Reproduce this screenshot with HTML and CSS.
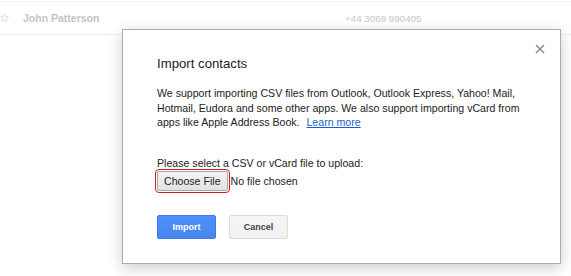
FILE: index.html
```html
<!DOCTYPE html>
<html lang="en">
<head>
  <meta charset="UTF-8">
  <meta name="viewport" content="width=device-width, initial-scale=1.0">
  <title>Import contacts</title>
  <link rel="stylesheet" href="styles.css">
</head>
<body>

  <div class="contact-list">
    <div class="contact-row">
      <svg class="contact-star" width="9" height="10" viewBox="0 0 9 10">
        <path d="M4.5 0.8 L5.6 3.6 L8.5 3.8 L6.3 5.7 L7 8.8 L4.5 7.2 L2 8.8 L2.7 5.7 L0.5 3.8 L3.4 3.6 Z" fill="none" stroke="#dcdcdc" stroke-width="0.9"/>
      </svg>
      <span class="contact-name">John Patterson</span>
      <span class="contact-phone">+44 3069 990405</span>
    </div>
  </div>

  <div class="import-dialog">
    <svg class="dialog-close" width="10" height="10" viewBox="0 0 10 10">
      <path d="M1 1 L9 9 M9 1 L1 9" stroke="#8a8a8a" stroke-width="1.5"/>
    </svg>
    <h2 class="dialog-title">Import contacts</h2>
    <p class="dialog-text">
      We support importing CSV files from Outlook, Outlook Express, Yahoo! Mail,
      Hotmail, Eudora and some other apps. We also support importing vCard from
      apps like Apple Address Book. <a href="#" class="dialog-link">Learn more</a>
    </p>
    <div class="upload-label">Please select a CSV or vCard file to upload:</div>
    <div class="upload-row">
      <span class="file-focus"><button type="button" class="file-button">Choose File</button></span>
      <span class="file-status">No file chosen</span>
    </div>
    <div class="dialog-actions">
      <button type="button" class="btn btn-import">Import</button>
      <button type="button" class="btn btn-cancel">Cancel</button>
    </div>
  </div>

</body>
</html>
```

FILE: styles.css
```css
body {
  margin: 0;
  font-family: Arial, "Liberation Sans", sans-serif;
  background-color: #fff;
  color: #222;
}

.contact-list {
  padding-top: 1px;
}

.contact-row {
  display: flex;
  align-items: center;
  height: 32px;
  border-top: 1px solid #f3f3f3;
  border-bottom: 1px solid #eeeeee;
}

.contact-star {
  margin-left: 0;
  flex-shrink: 0;
}

.contact-name {
  margin-left: 14px;
  width: 322px;
  font-size: 10.5px;
  font-weight: bold;
  color: #c4c4c4;
}

.contact-phone {
  font-size: 9.8px;
  color: #c8c8c8;
}

.import-dialog {
  position: absolute;
  left: 122px;
  top: 29px;
  width: 369px;
  padding: 26px 34px 24px 34px;
  background-color: #fff;
  border: 1px solid #ababab;
  box-shadow: 0 4px 14px rgba(0, 0, 0, 0.2);
}

.dialog-close {
  position: absolute;
  top: 14px;
  right: 15px;
}

.dialog-title {
  margin: 0 0 14px 0;
  font-size: 13.2px;
  font-weight: normal;
  line-height: 16px;
  color: #222;
}

.dialog-text {
  margin: 0;
  font-size: 10.6px;
  line-height: 14.5px;
  color: #222;
}

.dialog-link {
  margin-left: 4px;
  color: #1a5fd0;
  text-decoration: underline;
}

.upload-label {
  margin-top: 26px;
  font-size: 10.6px;
  line-height: 14px;
  color: #222;
}

.upload-row {
  display: flex;
  align-items: center;
  height: 22px;
}

.file-focus {
  display: inline-block;
  margin-left: -2px;
  padding: 1px;
  border: 1px solid #d41c1c;
  border-radius: 4px;
}

.file-button {
  display: block;
  height: 20px;
  padding: 0 6px;
  font-family: Arial, "Liberation Sans", sans-serif;
  font-size: 10.6px;
  color: #222;
  background: linear-gradient(#f4f4f4, #e2e2e2);
  border: 1px solid #a9a9a9;
  border-radius: 2px;
}

.file-status {
  margin-left: 1px;
  font-size: 10.6px;
  color: #222;
}

.dialog-actions {
  display: flex;
  gap: 13px;
  margin-top: 23px;
}

.btn {
  width: 59px;
  height: 24px;
  font-family: Arial, "Liberation Sans", sans-serif;
  font-size: 9px;
  font-weight: bold;
  border-radius: 2px;
  padding: 0;
}

.btn-import {
  color: #fff;
  background: linear-gradient(#4d90fe, #4787ed);
  border: 1px solid #3b7cea;
}

.btn-cancel {
  color: #444;
  background: linear-gradient(#f5f5f5, #f1f1f1);
  border: 1px solid #dcdcdc;
}
```
